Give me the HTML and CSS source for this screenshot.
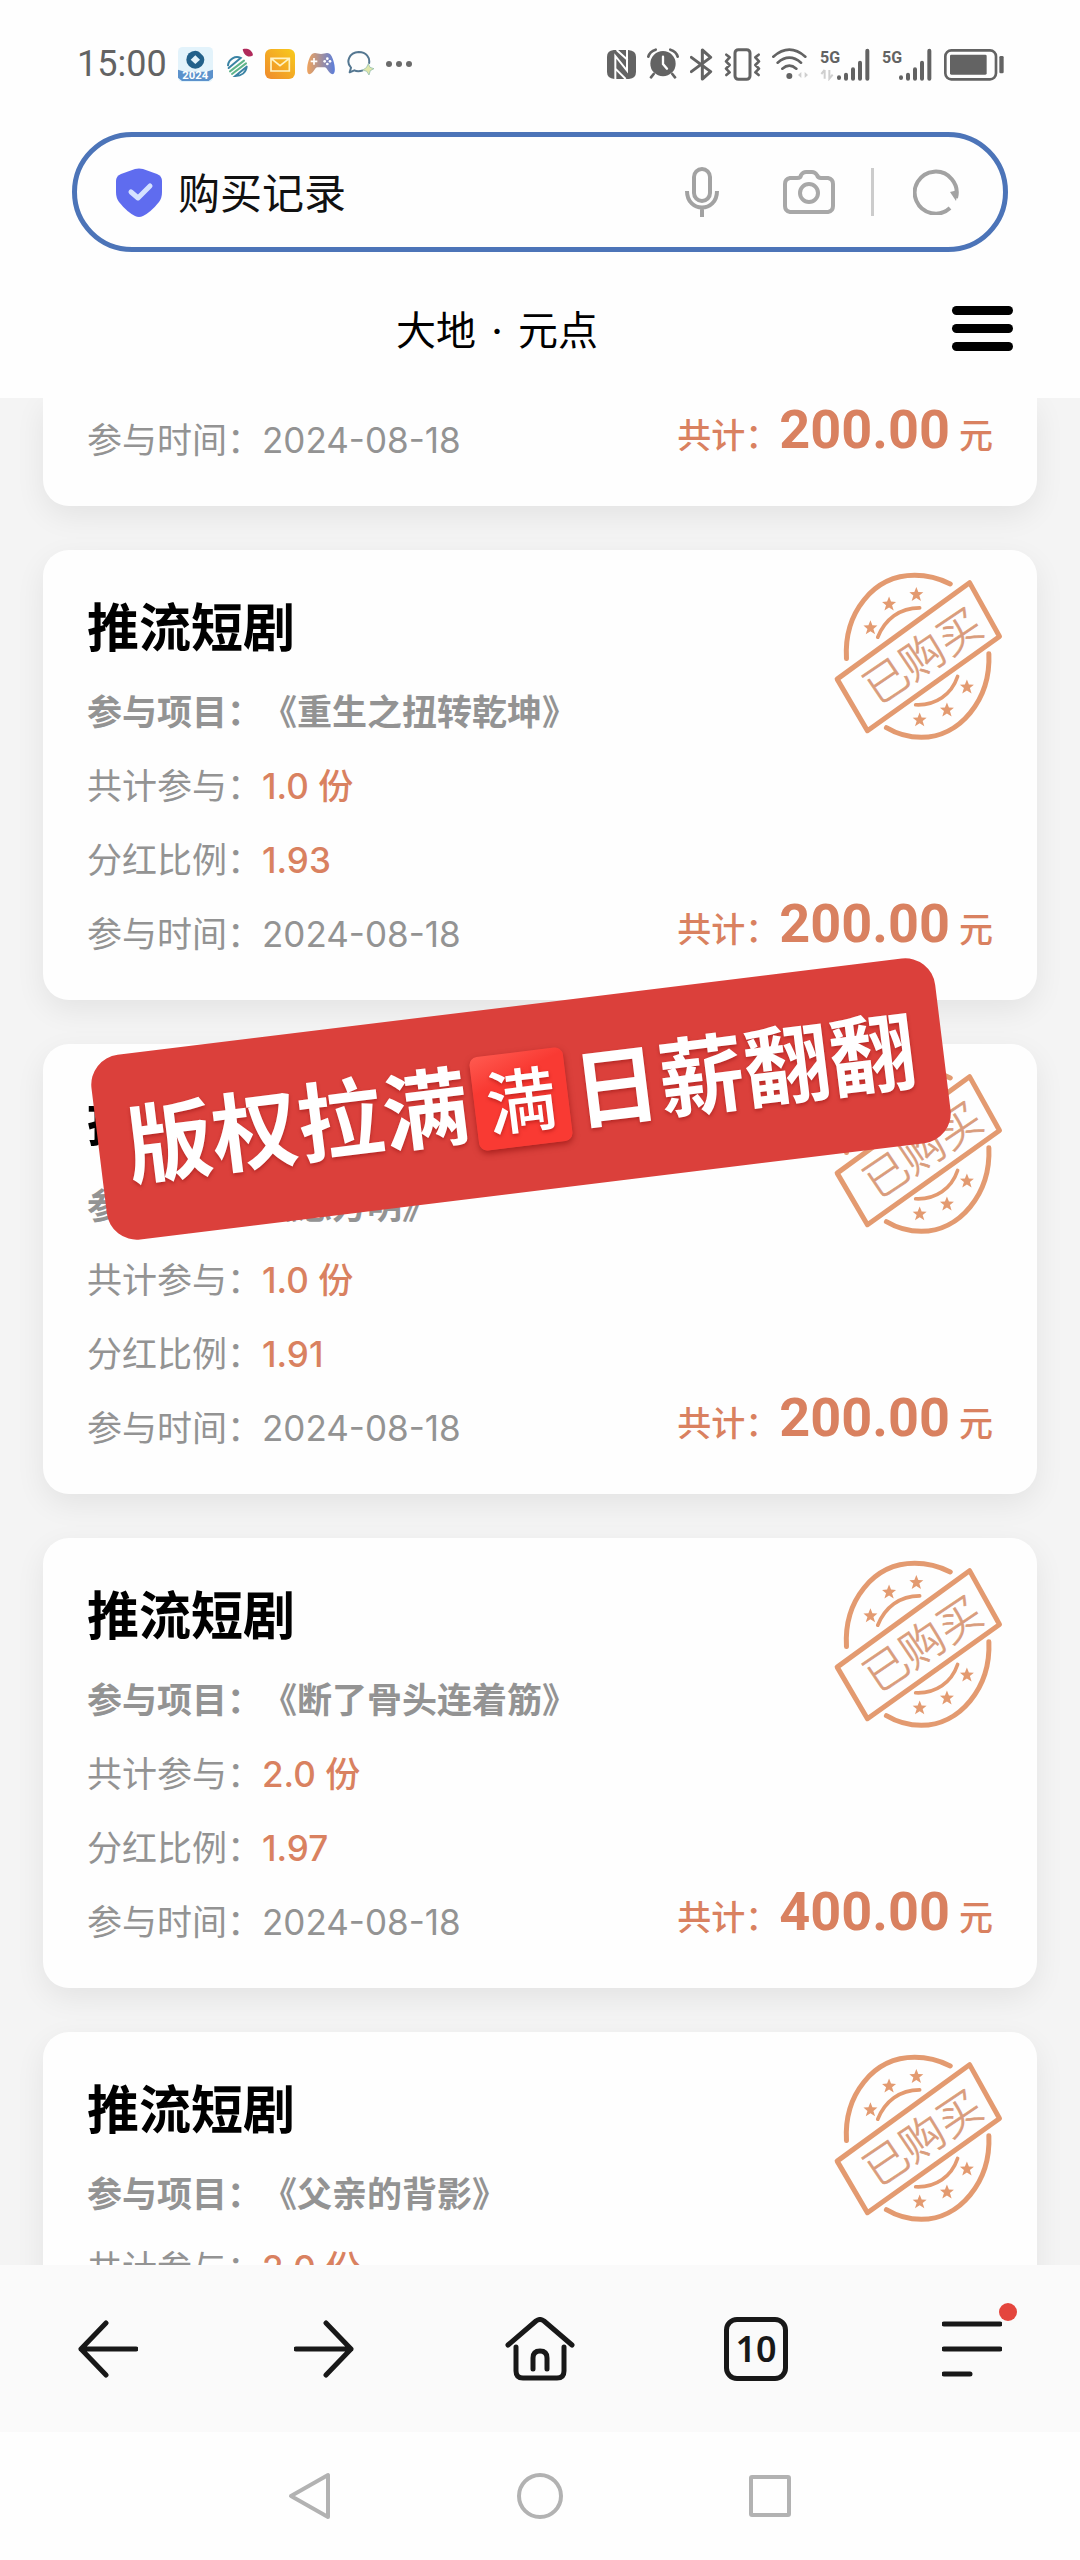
FILE: index.html
```html
<!DOCTYPE html>
<html lang="zh-CN">
  <head>
    <meta charset="UTF-8" />
    <meta name="viewport" content="width=device-width, initial-scale=1.0" />
    <title>购买记录</title>
    <link rel="stylesheet" href="styles.css">
  </head>
  <body>
    <!-- Shared shapes -->
    <svg class="defs" width="0" height="0" aria-hidden="true">
      <symbol id="stamp" viewBox="100 60 510 520">
        <g fill="none" stroke="#e39a70" stroke-width="15" stroke-linecap="round">
          <path d="M140 326C132 190 220 76 345 76C385 76 420 86 452 102" />
          <path d="M568 312C574 450 480 563 365 563C325 563 290 552 260 534" />
          <path d="M234 262C256 208 300 174 360 174" stroke-width="11" />
          <path d="M348 465C408 468 456 434 474 380" stroke-width="11" />
          <path d="M112 388L510 98L600 260L203 543Z" stroke-linejoin="round" />
        </g>
        <g fill="#e39a70">
          <path d="M0-22L6-7L21-6L9 4L14 20L0 11L-14 20L-9 4L-21-6L-6-7Z" transform="translate(212 233)" />
          <path d="M0-22L6-7L21-6L9 4L14 20L0 11L-14 20L-9 4L-21-6L-6-7Z" transform="translate(268 162)" />
          <path d="M0-22L6-7L21-6L9 4L14 20L0 11L-14 20L-9 4L-21-6L-6-7Z" transform="translate(350 133)" />
          <path d="M0-22L6-7L21-6L9 4L14 20L0 11L-14 20L-9 4L-21-6L-6-7Z" transform="translate(502 411)" />
          <path d="M0-22L6-7L21-6L9 4L14 20L0 11L-14 20L-9 4L-21-6L-6-7Z" transform="translate(442 480)" />
          <path d="M0-22L6-7L21-6L9 4L14 20L0 11L-14 20L-9 4L-21-6L-6-7Z" transform="translate(360 510)" />
        </g>
        <text class="stamp-text" x="370" y="366" text-anchor="middle" transform="rotate(-34 370 320)">已购买</text>
      </symbol>
    </svg>

    <!-- Phone status bar -->
    <div class="status-bar">
      <div class="status-left">
        <span class="clock">15:00</span>
        <svg width="35" height="35" viewBox="0 0 105 105">
          <rect width="105" height="105" rx="14" fill="#e3f3fb" />
          <circle cx="52" cy="38" r="27" fill="#23618a" />
          <path d="M52 25L66 38L52 51L38 38Z" fill="#e3f3fb" />
          <path d="M58 6L84 32" stroke="#e3f3fb" stroke-width="5" />
          <path d="M0 68L20 74H85L105 68V92L92 102H12L0 92Z" fill="#5c92cc" />
          <text x="52" y="97" text-anchor="middle" class="app-year">2024</text>
        </svg>
        <svg width="30" height="32" viewBox="0 0 90 96">
          <g fill="none" stroke-width="6" stroke-linecap="round">
            <path d="M12 52C14 34 34 22 50 30L14 60" stroke="#3a83a4" />
            <path d="M60 38L18 70M66 46L24 78" stroke="#5fb58a" />
            <path d="M68 56L34 84C52 84 66 74 68 56" stroke="#3a83a4" />
          </g>
          <path d="M56 4C68 0 84 4 87 22C76 30 60 26 56 4Z" fill="#b02a5b" />
        </svg>
        <svg width="30" height="30" viewBox="0 0 90 90">
          <defs>
            <linearGradient id="mail" x1="1" y1="0" x2="0" y2="1">
              <stop offset="0" stop-color="#f8cb1c" />
              <stop offset="1" stop-color="#ef8a2c" />
            </linearGradient>
          </defs>
          <rect width="90" height="90" rx="18" fill="url(#mail)" />
          <path d="M18 28H73V66H18ZM18 28L45 50L73 28" fill="none" stroke="#fff3c4" stroke-width="5" />
        </svg>
        <svg width="30" height="24" viewBox="0 0 90 72">
          <defs>
            <linearGradient id="pad">
              <stop offset="0" stop-color="#f0a35c" />
              <stop offset="1" stop-color="#5a7ddb" />
            </linearGradient>
          </defs>
          <path d="M18 6C28 0 34 6 45 6C56 6 62 0 72 6C84 18 92 60 82 66C70 70 64 46 56 46H34C26 46 20 70 8 66C-2 60 6 18 18 6Z" fill="url(#pad)" />
          <path d="M24 18V38M14 28H34" stroke="#fff" stroke-width="5" />
          <g fill="#fff">
            <circle cx="64" cy="20" r="4" />
            <circle cx="64" cy="36" r="4" />
            <circle cx="56" cy="28" r="4" />
            <circle cx="72" cy="28" r="4" />
          </g>
        </svg>
        <svg width="28" height="26" viewBox="0 0 84 78">
          <path d="M48 58C36 62 26 60 22 58L8 64L12 50C-4 34 6 4 35 3C58 3 70 20 66 38" fill="none" stroke="#547791" stroke-width="6" stroke-linejoin="round" />
          <path d="M64 38L69 49L81 53L70 59L66 72L59 61L47 57L58 50Z" fill="#dfe6a9" stroke="#86b7a9" stroke-width="2" />
        </svg>
        <svg width="26" height="6" viewBox="0 0 26 6" fill="#6b6b6b">
          <circle cx="3" cy="3" r="3" />
          <circle cx="13" cy="3" r="3" />
          <circle cx="23" cy="3" r="3" />
        </svg>
      </div>
      <div class="status-right">
        <svg width="29" height="29" viewBox="0 0 87 87">
          <path d="M20 0H64Q87 2 87 20V66Q87 85 66 87H22Q0 85 0 66V20Q0 2 20 0Z" fill="#636363" />
          <path d="M25 87V18L60 62V0M29 0L62 30M25 56L56 87" fill="none" stroke="#fff" stroke-width="6" />
        </svg>
        <svg width="32" height="32" viewBox="0 0 96 96">
          <circle cx="48" cy="47" r="38" fill="#636363" />
          <path d="M4 26Q8 10 26 5M70 5Q88 10 92 26M20 78L12 88M76 78L84 88" fill="none" stroke="#636363" stroke-width="8" stroke-linecap="round" />
          <path d="M48 26V48L60 62" fill="none" stroke="#fff" stroke-width="7" stroke-linecap="round" />
        </svg>
        <svg width="23" height="33" viewBox="0 0 69 99">
          <path d="M4 28L62 71L37 93V6L62 28L4 71" fill="none" stroke="#636363" stroke-width="9" stroke-linecap="round" stroke-linejoin="round" />
        </svg>
        <svg width="37" height="33" viewBox="0 0 111 99" fill="none" stroke="#636363" stroke-width="9" stroke-linejoin="round" stroke-linecap="round">
          <rect x="33" y="5" width="45" height="89" rx="10" />
          <path d="M7 20L17 28L6 40L17 51L6 62L17 73L7 81M104 20L94 28L105 40L94 51L105 62L94 73L104 81" stroke-width="8" />
        </svg>
        <svg width="37" height="32" viewBox="0 0 111 96">
          <path d="M4 26Q52-16 100 26M17 44Q52 14 87 44M31 62Q52 44 73 62" fill="none" stroke="#636363" stroke-width="8" stroke-linecap="round" />
          <circle cx="52" cy="84" r="9" fill="#636363" />
          <path d="M88 72L78 81L88 90ZM98 72L108 81L98 90Z" fill="#cfcfcf" />
        </svg>
        <svg width="51" height="33" viewBox="0 0 153 99">
          <text x="0" y="44" class="net-text">5G</text>
          <path d="M14 66V92M14 66L4 78M28 66V92L38 80" fill="none" stroke="#cfcfcf" stroke-width="6" />
          <path d="M99 64V92M120 44V92M142 8V92M78 80V92M57 88V90" stroke="#636363" stroke-width="12" stroke-linecap="round" />
        </svg>
        <svg width="51" height="33" viewBox="0 0 153 99">
          <text x="0" y="44" class="net-text">5G</text>
          <path d="M99 64V92M120 44V92M142 8V92M78 80V92M57 88V90" stroke="#636363" stroke-width="12" stroke-linecap="round" />
        </svg>
        <svg width="60" height="33" viewBox="0 0 180 99">
          <rect x="4" y="7" width="152" height="87" rx="18" fill="none" stroke="#636363" stroke-width="8" />
          <rect x="18" y="20" width="110" height="60" rx="4" fill="#636363" />
          <rect x="166" y="24" width="13" height="52" rx="4" fill="#636363" />
        </svg>
      </div>
    </div>

    <!-- Browser address bar -->
    <div class="search-bar">
      <svg width="46" height="49" viewBox="0 0 46 49">
        <path d="M19 1Q23 0 27 1L41 6Q46 8 46 13V24Q46 30 43 34Q35 44 27 48Q23 50 19 48Q11 44 3 34Q0 30 0 24V13Q0 8 5 6Z" fill="#5f6cef" />
        <path d="M15 24L22 30L34 18" fill="none" stroke="#d5e2ff" stroke-width="5" stroke-linecap="round" stroke-linejoin="round" />
      </svg>
      <input class="search-input" type="text" value="购买记录" aria-label="地址栏">
      <div class="search-tools">
        <button type="button" aria-label="语音">
          <svg width="34" height="50" viewBox="0 0 34 50" fill="none" stroke="#a2a2a2" stroke-width="4">
            <rect x="9" y="2" width="16" height="32" rx="8" />
            <path d="M2 24C2 46 32 46 32 24M17 41V50" />
          </svg>
        </button>
        <button type="button" aria-label="拍照">
          <svg width="52" height="44" viewBox="0 0 52 44" fill="none" stroke="#a8a8a8" stroke-width="4">
            <path d="M14 8Q18 8 18 5Q20 2 23 2H29Q32 2 34 5Q35 8 38 8H45Q50 9 50 14V36Q50 41 45 42H7Q2 41 2 36V14Q2 9 7 8Z" />
            <circle cx="26" cy="23" r="9" />
          </svg>
        </button>
        <span class="divider"></span>
        <button type="button" aria-label="刷新">
          <svg width="46" height="46" viewBox="0 0 46 46">
            <path d="M37 39A21 21 0 1 1 43 29" fill="none" stroke="#a2a2a2" stroke-width="4" />
            <path d="M37 23L45 21L43 32Z" fill="#a2a2a2" />
          </svg>
        </button>
      </div>
    </div>

    <header class="page-header">
      <h1>大地 <span class="dot">·</span> 元点</h1>
      <button class="menu-button" type="button" aria-label="菜单">
        <span></span>
        <span></span>
        <span></span>
      </button>
    </header>

    <!-- Purchase records -->
    <main class="records">
      <article class="card card-cut">
        <div class="card-foot">
          <p>参与时间：2024-08-18</p>
          <p class="total">共计：<strong>200.00</strong> 元</p>
        </div>
      </article>

      <article class="card">
        <svg class="stamp"><use href="#stamp" /></svg>
        <h2>推流短剧</h2>
        <p class="project">参与项目：《重生之扭转乾坤》</p>
        <p>共计参与：<span class="value">1.0 份</span></p>
        <p>分红比例：<span class="value">1.93</span></p>
        <div class="card-foot">
          <p>参与时间：2024-08-18</p>
          <p class="total">共计：<strong>200.00</strong> 元</p>
        </div>
      </article>

      <article class="card">
        <svg class="stamp"><use href="#stamp" /></svg>
        <h2>推流短剧</h2>
        <p class="project">参与项目：《念方明》</p>
        <p>共计参与：<span class="value">1.0 份</span></p>
        <p>分红比例：<span class="value">1.91</span></p>
        <div class="card-foot">
          <p>参与时间：2024-08-18</p>
          <p class="total">共计：<strong>200.00</strong> 元</p>
        </div>
        <div class="banner">版权拉满<span class="full-badge">満</span>日薪翻翻</div>
      </article>

      <article class="card">
        <svg class="stamp"><use href="#stamp" /></svg>
        <h2>推流短剧</h2>
        <p class="project">参与项目：《断了骨头连着筋》</p>
        <p>共计参与：<span class="value">2.0 份</span></p>
        <p>分红比例：<span class="value">1.97</span></p>
        <div class="card-foot">
          <p>参与时间：2024-08-18</p>
          <p class="total">共计：<strong>400.00</strong> 元</p>
        </div>
      </article>

      <article class="card">
        <svg class="stamp"><use href="#stamp" /></svg>
        <h2>推流短剧</h2>
        <p class="project">参与项目：《父亲的背影》</p>
        <p>共计参与：<span class="value">2.0 份</span></p>
      </article>
    </main>

    <!-- Browser toolbar -->
    <nav class="toolbar">
      <button type="button" aria-label="后退">
        <svg width="60" height="58" viewBox="0 0 60 58"><path d="M58 29H3M28 3L3 29L28 55" /></svg>
      </button>
      <button type="button" aria-label="前进">
        <svg width="60" height="58" viewBox="0 0 60 58"><path d="M2 29H57M32 3L57 29L32 55" /></svg>
      </button>
      <button type="button" aria-label="主页">
        <svg width="70" height="64" viewBox="0 0 70 64"><path d="M3 28L31 4Q35 1 39 4L67 28M11 30V54Q11 61 18 61H52Q59 61 59 54V30M28 52V41Q28 34 35 34Q42 34 42 41V52" /></svg>
      </button>
      <button type="button" aria-label="标签页">
        <span class="tab-count">10</span>
      </button>
      <button type="button" aria-label="更多">
        <span class="more">
          <svg width="60" height="58" viewBox="0 0 60 58"><path d="M2 4H58M2 29H58M2 54H28" /></svg>
        </span>
      </button>
    </nav>

    <!-- System keys -->
    <nav class="system-nav">
      <button type="button" aria-label="返回">
        <svg width="46" height="48" viewBox="0 0 46 48"><path d="M41 3V45L4 24Z" /></svg>
      </button>
      <button type="button" aria-label="桌面">
        <svg width="48" height="48" viewBox="0 0 48 48"><circle cx="24" cy="24" r="21" /></svg>
      </button>
      <button type="button" aria-label="最近任务">
        <svg width="46" height="46" viewBox="0 0 46 46"><rect x="4" y="4" width="38" height="38" rx="1" /></svg>
      </button>
    </nav>
  </body>
</html>
```

FILE: styles.css
```css
/* basic styling */
* {
  margin: 0;
  padding: 0;
  box-sizing: border-box;
}
body {
  display: flex;
  flex-direction: column;
  height: 100vh;
  overflow: hidden;
  font-family: Inter, "Noto Sans CJK SC", sans-serif;
  background-color: #fefefe;
  color: #000000;
}
button {
  display: flex;
  align-items: center;
  justify-content: center;
  background: none;
  border: none;
  font-family: inherit;
  color: inherit;
  cursor: pointer;
}
.defs {
  position: absolute;
}

/* Status bar */
.status-bar {
  display: flex;
  flex-shrink: 0;
  justify-content: space-between;
  align-items: center;
  height: 128px;
  padding: 0 76px 0 77px;
}
.status-left,
.status-right {
  display: flex;
  align-items: center;
  gap: 11px;
}
.clock {
  font-family: Roboto, sans-serif;
  font-size: 36px;
  color: #636363;
}
.app-year {
  font-family: Roboto, sans-serif;
  font-size: 34px;
  font-weight: bold;
  fill: #ffffff;
}
.net-text {
  font-family: Roboto, sans-serif;
  font-size: 48px;
  font-weight: bold;
  fill: #636363;
}

/* Address bar */
.search-bar {
  display: flex;
  flex-shrink: 0;
  align-items: center;
  height: 120px;
  margin: 4px 72px 0;
  padding: 0 44px 0 39px;
  border: 5px solid #4c74b8;
  border-radius: 60px;
}
.search-input {
  flex: 1;
  min-width: 0;
  height: 80px;
  margin-left: 16px;
  padding-bottom: 4px;
  border: none;
  outline: none;
  background: none;
  font-family: "Noto Sans CJK SC", sans-serif;
  font-size: 42px;
  color: #111111;
}
.search-tools {
  display: flex;
  align-items: center;
}
.search-tools button {
  margin-left: 64px;
}
.divider {
  width: 3px;
  height: 48px;
  margin: 0 -25px 0 36px;
  background-color: #cccccc;
}

/* Page header */
.page-header {
  display: flex;
  flex-shrink: 0;
  align-items: center;
  height: 146px;
  padding: 6px 67px 0 42px;
}
.page-header h1 {
  flex: 1;
  font-size: 40px;
  font-weight: 400;
  text-align: center;
}
.dot {
  margin: 0 4px;
}
.menu-button {
  flex-direction: column;
  gap: 9px;
}
.menu-button span {
  width: 61px;
  height: 9px;
  border-radius: 5px;
  background-color: #000000;
}

/* Record list */
.records {
  display: flex;
  flex: 1;
  flex-direction: column;
  gap: 44px;
  min-height: 0;
  padding: 0 43px;
  overflow: hidden;
  background-color: #f4f4f4;
}
.card {
  position: relative;
  flex-shrink: 0;
  padding: 40px 44px 29px;
  border-radius: 26px;
  background-color: #fefefe;
  box-shadow: 0 10px 30px rgba(0, 0, 0, 0.07);
  font-size: 35px;
  line-height: 74px;
  color: #939393;
  text-spacing-trim: space-all;
}
.card-cut {
  padding-top: 5px;
  border-radius: 0 0 26px 26px;
}
.card h2 {
  margin-bottom: 7px;
  font-size: 52px;
  line-height: 78px;
  color: #000000;
}
.project {
  font-weight: bold;
}
.value {
  font-weight: 500;
  color: #d98160;
}
.card-foot {
  display: flex;
  justify-content: space-between;
  align-items: center;
  height: 74px;
}
.total {
  margin-bottom: 14px;
  font-size: 34px;
  font-weight: 500;
  color: #d98160;
}
.total strong {
  font-family: Roboto, sans-serif;
  font-size: 54px;
}

/* Purchased stamp */
.stamp {
  position: absolute;
  top: 20px;
  right: 34px;
  width: 170px;
  height: 173px;
}
.stamp-text {
  font-family: "Noto Sans CJK SC", sans-serif;
  font-size: 132px;
  font-weight: 300;
  fill: #d99c7c;
  stroke: #d99c7c;
  stroke-width: 2px;
}

/* Tilted banner over the list */
.banner {
  position: absolute;
  top: -38px;
  left: 53px;
  z-index: 1;
  display: flex;
  align-items: center;
  justify-content: center;
  width: 850px;
  height: 186px;
  border-radius: 30px;
  background-color: #db403b;
  font-size: 86px;
  font-weight: bold;
  white-space: nowrap;
  color: #ffffff;
  text-shadow: 0 2px 4px rgba(120, 0, 0, 0.4);
  transform: rotate(-7deg);
}
.full-badge {
  width: 94px;
  height: 94px;
  margin: 0 6px;
  border-radius: 8px;
  background: linear-gradient(160deg, #ff5a50, #f93a33 30%);
  box-shadow: 0 3px 6px rgba(120, 0, 0, 0.5);
  font-family: "Noto Sans CJK JP", sans-serif;
  font-size: 70px;
  font-weight: 500;
  line-height: 90px;
  text-align: center;
}

/* Browser toolbar */
.toolbar {
  display: grid;
  flex-shrink: 0;
  grid-template-columns: repeat(5, 1fr);
  height: 167px;
  background-color: #fafafa;
}
.toolbar svg {
  fill: none;
  stroke: #181818;
  stroke-width: 5;
  stroke-linecap: round;
  stroke-linejoin: round;
}
.tab-count {
  width: 64px;
  height: 64px;
  border: 5px solid #181818;
  border-radius: 13px;
  font-family: "Noto Sans", sans-serif;
  font-size: 36px;
  font-weight: 600;
  line-height: 54px;
  text-align: center;
  color: #181818;
}
.more {
  position: relative;
  display: flex;
}
.more::after {
  content: "";
  position: absolute;
  top: -17px;
  right: -15px;
  width: 18px;
  height: 18px;
  border-radius: 50%;
  background-color: #e4453d;
}

/* System keys */
.system-nav {
  display: flex;
  flex-shrink: 0;
  justify-content: center;
  align-items: center;
  gap: 183px;
  height: 128px;
}
.system-nav svg {
  fill: none;
  stroke: #b2b2b2;
  stroke-width: 4;
  stroke-linejoin: round;
}
```
